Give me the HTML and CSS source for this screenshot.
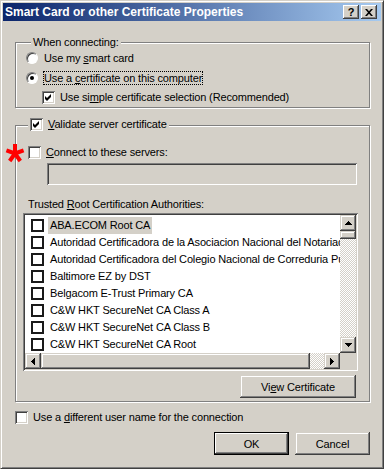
FILE: index.html
```html
<!DOCTYPE html>
<html>
<head>
<meta charset="utf-8">
<link rel="stylesheet" href="styles.css">
</head>
<body>
<div class="window">
  <div class="titlebar">
    <span class="title">Smart Card or other Certificate Properties</span>
    <div class="caption-btns">
      <span class="cbtn help">?</span>
      <span class="cbtn close"><svg width="8" height="7" viewBox="0 0 8 7"><path d="M0 0h2l2 2.2L6 0h2L5 3.5 8 7H6L4 4.8 2 7H0l3-3.5z" fill="#000"/></svg></span>
    </div>
  </div>
  <div class="content">
    <div class="group g1">
      <div class="legend">When connecting:</div>
      <div class="opt r1"><span class="radio"></span><span class="lbl">Use my <u>s</u>mart card</span></div>
      <div class="opt r2"><span class="radio on"><span class="dot"></span></span><span class="lbl focus">Use a <u>c</u>ertificate on this computer</span></div>
      <div class="opt r3"><span class="check"><svg width="7" height="7" viewBox="0 0 7 7"><path d="M0 2l2 2 4-4v3l-4 4-2-2z" fill="#000"/></svg></span><span class="lbl">Use si<u>m</u>ple certificate selection (Recommended)</span></div>
    </div>

    <div class="group g2">
      <div class="legend legend-check"><span class="check"><svg width="7" height="7" viewBox="0 0 7 7"><path d="M0 2l2 2 4-4v3l-4 4-2-2z" fill="#000"/></svg></span><span class="lbl"><u>V</u>alidate server certificate</span></div>
      <div class="opt connect">
        <svg class="asterisk" width="20" height="20" viewBox="0 0 20 20"><g stroke="#f00" stroke-width="4" stroke-linecap="butt"><line x1="10" y1="10.5" x2="10" y2="1"/><line x1="10" y1="10.5" x2="18.6" y2="7.4"/><line x1="10" y1="10.5" x2="15.3" y2="18"/><line x1="10" y1="10.5" x2="4.7" y2="18"/><line x1="10" y1="10.5" x2="1.4" y2="7.4"/></g></svg>
        <span class="check"></span><span class="lbl"><u>C</u>onnect to these servers:</span>
      </div>
      <div class="edit"></div>
      <div class="caption">Trusted <u>R</u>oot Certification Authorities:</div>
      <div class="listbox">
        <div class="rows">
          <div class="item"><span class="fcheck"></span><span class="itext sel">ABA.ECOM Root CA</span></div>
          <div class="item"><span class="fcheck"></span><span class="itext">Autoridad Certificadora de la Asociacion Nacional del Notariado Mexicano</span></div>
          <div class="item"><span class="fcheck"></span><span class="itext">Autoridad Certificadora del Colegio Nacional de Correduria Publica Mexicana</span></div>
          <div class="item"><span class="fcheck"></span><span class="itext">Baltimore EZ by DST</span></div>
          <div class="item"><span class="fcheck"></span><span class="itext">Belgacom E-Trust Primary CA</span></div>
          <div class="item"><span class="fcheck"></span><span class="itext">C&amp;W HKT SecureNet CA Class A</span></div>
          <div class="item"><span class="fcheck"></span><span class="itext">C&amp;W HKT SecureNet CA Class B</span></div>
          <div class="item"><span class="fcheck"></span><span class="itext">C&amp;W HKT SecureNet CA Root</span></div>
        </div>
        <div class="vscroll">
          <span class="sbtn"><svg width="7" height="4" viewBox="0 0 7 4"><path d="M3 0h1v1h1v1h1v1h1v1H0V3h1V2h1V1h1z" fill="#000"/></svg></span>
          <span class="vthumb"></span>
          <span class="track"></span>
          <span class="sbtn"><svg width="7" height="4" viewBox="0 0 7 4"><path d="M0 0h7v1H6v1H5v1H4v1H3V3H2V2H1V1H0z" fill="#000"/></svg></span>
        </div>
        <div class="hscroll">
          <span class="sbtn"><svg width="4" height="7" viewBox="0 0 4 7"><path d="M4 0v7H3V6H2V5H1V4H0V3h1V2h1V1h1V0z" fill="#000"/></svg></span>
          <span class="hthumb"></span>
          <span class="track"></span>
          <span class="sbtn"><svg width="4" height="7" viewBox="0 0 4 7"><path d="M0 0h1v1h1v1h1v1h1v1H3v1H2v1H1v1H0z" fill="#000"/></svg></span>
        </div>
        <div class="corner"></div>
      </div>
      <div class="btnrow"><span class="btn view">Vi<u>e</u>w Certificate</span></div>
    </div>

    <div class="opt diff"><span class="check"></span><span class="lbl">Use a <u>d</u>ifferent user name for the connection</span></div>

    <div class="footer">
      <span class="btn default">OK</span>
      <span class="btn">Cancel</span>
    </div>
  </div>
</div>
</body>
</html>
```
FILE: styles.css
```css
html, body {
  margin: 0;
  padding: 0;
}
body {
  background: #d4d0c8;
  font-family: "Liberation Sans", Arial, sans-serif;
  font-size: 11px;
  letter-spacing: -0.15px;
  color: #000;
}
u { text-decoration: underline; text-underline-offset: 1px; }

.window {
  width: 384px;
  height: 469px;
  box-sizing: border-box;
  border: 1px solid;
  border-color: #d4d0c8 #404040 #404040 #d4d0c8;
  box-shadow: inset 1px 1px #fff, inset -1px -1px #808080;
  padding: 2px;
  display: flex;
  flex-direction: column;
}

.titlebar {
  height: 18px;
  flex: none;
  background: linear-gradient(to right, #0a246a, #a6caf0);
  display: flex;
  align-items: center;
  justify-content: space-between;
  padding: 0 4px 0 2px;
}
.title {
  color: #fff;
  font-weight: bold;
  font-size: 12px;
  letter-spacing: 0;
  white-space: nowrap;
}
.caption-btns {
  display: flex;
  gap: 2px;
}
.cbtn {
  width: 16px;
  height: 14px;
  box-sizing: border-box;
  background: #d4d0c8;
  box-shadow: inset -1px -1px #404040, inset 1px 1px #fff, inset -2px -2px #808080;
  display: flex;
  align-items: center;
  justify-content: center;
  font-weight: bold;
  font-size: 11px;
  line-height: 1;
}
.cbtn.help { padding-top: 0; }

.content {
  flex: 1;
  padding: 21px 11px 0 12px;
}

.group {
  border: 1px solid #808080;
  box-shadow: inset 1px 1px #fff, 1px 1px #fff;
}
.legend {
  width: fit-content;
  background: #d4d0c8;
  height: 13px;
  line-height: 13px;
  margin-top: -7px;
  margin-left: 5px;
  padding: 0 2px;
}

.g1 {
  padding: 0 0 2px 10px;
}
.opt {
  height: 16px;
  display: flex;
  align-items: center;
}
.r1 { margin-top: 1px; }
.r2 { margin-top: 4px; }
.r3 { margin-top: 3px; padding-left: 16px; }

.radio {
  width: 12px;
  height: 12px;
  box-sizing: border-box;
  border-radius: 50%;
  background: #fff;
  border: 1px solid;
  border-color: #808080 #fff #fff #808080;
  box-shadow: inset 1px 1px #404040;
  display: flex;
  align-items: center;
  justify-content: center;
  flex: none;
}
.dot {
  width: 4px;
  height: 4px;
  border-radius: 50%;
  background: #000;
}
.lbl {
  margin-left: 5px;
  white-space: nowrap;
  line-height: 13px;
}
.radio + .lbl { margin-left: 6px; }
.focus {
  margin-left: 5px !important;
  border: 1px dotted #000;
  padding: 0;
  line-height: 12px;
}

.check {
  width: 13px;
  height: 13px;
  box-sizing: border-box;
  flex: none;
  background: #fff;
  box-shadow: inset 1px 1px #808080, inset -1px -1px #fff, inset 2px 2px #404040, inset -2px -2px #d4d0c8;
  display: flex;
  align-items: center;
  justify-content: center;
}
.check svg { display: block; }

.g2 {
  margin-top: 17px;
  padding: 0 11px 3px 7px;
}
.legend-check {
  margin-top: -8px;
  display: flex;
  align-items: center;
}
.connect {
  position: relative;
  margin-top: 13px;
  padding-left: 5px;
}
.asterisk {
  position: absolute;
  left: -18px;
  top: -1px;
}
.edit {
  height: 22px;
  margin: 3px 1px 0 24px;
  background: #d4d0c8;
  box-shadow: inset 1px 1px #808080, inset -1px -1px #fff, inset 2px 2px #404040, inset -2px -2px #d4d0c8;
}
.caption {
  margin-top: 13px;
  padding-left: 5px;
  line-height: 13px;
  height: 13px;
}

.listbox {
  margin-top: 2px;
  height: 158px;
  box-sizing: border-box;
  padding: 2px;
  background: #fff;
  box-shadow: inset 1px 1px #808080, inset -1px -1px #fff, inset 2px 2px #404040, inset -2px -2px #d4d0c8;
  display: grid;
  grid-template-columns: 1fr 16px;
  grid-template-rows: 1fr 16px;
}
.rows {
  overflow: hidden;
  padding-top: 2px;
}
.item {
  height: 17px;
  display: flex;
  align-items: center;
  padding-left: 6px;
  white-space: nowrap;
}
.fcheck {
  width: 13px;
  height: 13px;
  box-sizing: border-box;
  border: 2px solid #1a1a1a;
  background: #fff;
  flex: none;
}
.itext {
  margin-left: 4px;
  padding: 0 2px;
  line-height: 17px;
}
.itext.sel { background: #d4d0c8; }

.vscroll {
  display: flex;
  flex-direction: column;
}
.hscroll {
  display: flex;
}
.sbtn {
  width: 16px;
  height: 16px;
  flex: none;
  box-sizing: border-box;
  background: #d4d0c8;
  box-shadow: inset -1px -1px #404040, inset 1px 1px #d4d0c8, inset -2px -2px #808080, inset 2px 2px #fff;
  display: flex;
  align-items: center;
  justify-content: center;
}
.sbtn svg { display: block; }
.track {
  flex: 1;
  background: repeating-conic-gradient(#fff 0 25%, #d4d0c8 0 50%) 0 0 / 2px 2px;
}
.vthumb {
  height: 8px;
  flex: none;
  background: #d4d0c8;
  box-shadow: inset -1px -1px #404040, inset 1px 1px #d4d0c8, inset -2px -2px #808080, inset 2px 2px #fff;
}
.hthumb {
  width: 269px;
  flex: none;
  background: #d4d0c8;
  box-shadow: inset -1px -1px #404040, inset 1px 1px #d4d0c8, inset -2px -2px #808080, inset 2px 2px #fff;
}
.corner { background: #d4d0c8; }

.btnrow {
  margin-top: 4px;
  display: flex;
  justify-content: flex-end;
  padding-right: 2px;
}
.btn {
  height: 23px;
  width: 75px;
  box-sizing: border-box;
  background: #d4d0c8;
  box-shadow: inset -1px -1px #404040, inset 1px 1px #d4d0c8, inset -2px -2px #808080, inset 2px 2px #fff;
  display: flex;
  align-items: center;
  justify-content: center;
  white-space: nowrap;
}
.btn.view { width: 116px; }
.btn.default {
  border: 1px solid #000;
  box-shadow: inset -1px -1px #404040, inset 1px 1px #fff, inset -2px -2px #808080;
}

.diff {
  margin-top: 7px;
}
.diff .lbl { margin-left: 5px; }

.footer {
  margin-top: 7px;
  display: flex;
  justify-content: flex-end;
  gap: 6px;
}
```
